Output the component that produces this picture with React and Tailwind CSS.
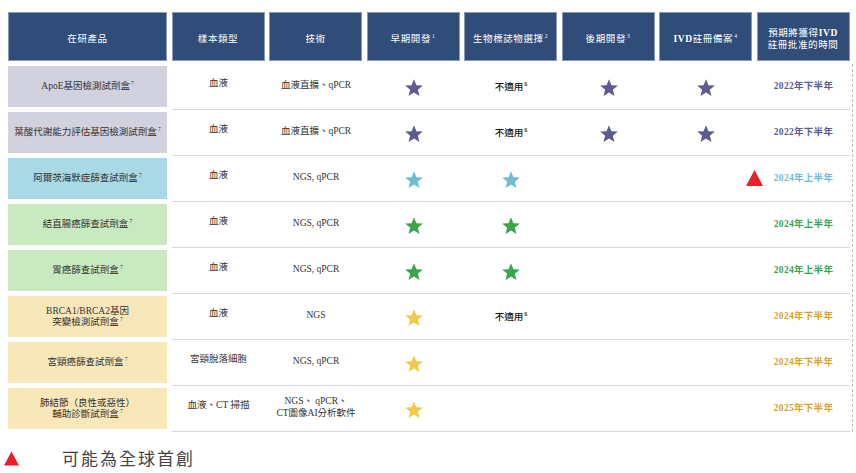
import React from "react";

const FONT = { fontFamily: '"Liberation Serif", "Noto Sans CJK TC", serif' };
const SANS = { fontFamily: '"Noto Sans CJK TC", "Noto Sans", sans-serif' };

function Star({ color }) {
  return (
    <svg width="20" height="20" viewBox="0 0 24 24">
      <polygon
        points="12,1.5 14.9,8.7 22.6,9.1 16.6,14 18.6,21.6 12,17.4 5.4,21.6 7.4,14 1.4,9.1 9.1,8.7"
        fill={color}
      />
    </svg>
  );
}

function Tri({ w = 17, h = 16 }) {
  return (
    <svg width={w} height={h} viewBox="0 0 17 16">
      <polygon points="8.5,0 17,16 0,16" fill="#e8202a" />
    </svg>
  );
}

const Sup = ({ children }) => (
  <span className="inline-block text-[5.5px] leading-none relative top-[-4px] ml-[1px]">{children}</span>
);

const rows = [
  {
    name: ["ApoE基因檢測試劑盒"],
    bg: "bg-[#d1d1df]",
    color: "#5d5b90",
    sample: "血液",
    tech: ["血液直擴、qPCR"],
    early: true,
    bio: "na",
    late: true,
    ivd: true,
    date: "2022年下半年",
    dateColor: "text-[#5d5b90]",
  },
  {
    name: ["葉酸代謝能力評估基因檢測試劑盒"],
    bg: "bg-[#d1d1df]",
    color: "#5d5b90",
    sample: "血液",
    tech: ["血液直擴、qPCR"],
    early: true,
    bio: "na",
    late: true,
    ivd: true,
    date: "2022年下半年",
    dateColor: "text-[#5d5b90]",
  },
  {
    name: ["阿爾茨海默症篩查試劑盒"],
    bg: "bg-[#a9d9e4]",
    color: "#6cbdd5",
    sample: "血液",
    tech: ["NGS, qPCR"],
    early: true,
    bio: "star",
    tri: true,
    date: "2024年上半年",
    dateColor: "text-[#6cbdd5]",
  },
  {
    name: ["結直腸癌篩查試劑盒"],
    bg: "bg-[#c9e9c0]",
    color: "#3aa64c",
    sample: "血液",
    tech: ["NGS, qPCR"],
    early: true,
    bio: "star",
    date: "2024年上半年",
    dateColor: "text-[#3aa64c]",
  },
  {
    name: ["胃癌篩查試劑盒"],
    bg: "bg-[#c9e9c0]",
    color: "#3aa64c",
    sample: "血液",
    tech: ["NGS, qPCR"],
    early: true,
    bio: "star",
    date: "2024年上半年",
    dateColor: "text-[#3aa64c]",
  },
  {
    name: ["BRCA1/BRCA2基因", "突變檢測試劑盒"],
    bg: "bg-[#f8e7b8]",
    color: "#f3c94c",
    sample: "血液",
    tech: ["NGS"],
    early: true,
    bio: "na",
    date: "2024年下半年",
    dateColor: "text-[#d9a521]",
  },
  {
    name: ["宮頸癌篩查試劑盒"],
    bg: "bg-[#f8e7b8]",
    color: "#f3c94c",
    sample: "宮頸脫落細胞",
    tech: ["NGS, qPCR"],
    early: true,
    date: "2024年下半年",
    dateColor: "text-[#d9a521]",
  },
  {
    name: ["肺結節（良性或惡性）", "輔助診斷試劑盒"],
    bg: "bg-[#f8e7b8]",
    color: "#f3c94c",
    sample: "血液、CT 掃描",
    tech: ["NGS、 qPCR、", "CT圖像AI分析軟件"],
    early: true,
    date: "2025年下半年",
    dateColor: "text-[#d9a521]",
  },
];

function HeadCell({ children }) {
  return (
    <div className="bg-[#304d7a] border border-[#8a9bb8] flex items-center justify-center text-center text-white text-[9.5px] leading-[12px] tracking-[0.6px] pt-[4px]">
      <div>{children}</div>
    </div>
  );
}

export default function App() {
  return (
    <div className="w-[856px] h-[473px] bg-white overflow-hidden text-[#333]" style={FONT}>
      <div className="pt-[12px] pl-[8px]">
        <div className="grid grid-cols-[159px_repeat(7,93px)] gap-x-[4.5px] h-[49px] w-[843px]">
          <HeadCell>在研產品</HeadCell>
          <HeadCell>樣本類型</HeadCell>
          <HeadCell>技術</HeadCell>
          <HeadCell>
            早期開發<Sup>1</Sup>
          </HeadCell>
          <HeadCell>
            生物標誌物選擇<Sup>2</Sup>
          </HeadCell>
          <HeadCell>
            後期開發<Sup>3</Sup>
          </HeadCell>
          <HeadCell>
            <b>IVD</b>註冊備案<Sup>4</Sup>
          </HeadCell>
          <HeadCell>
            預期將獲得<b>IVD</b>
            <br />
            註冊批准的時間
          </HeadCell>
        </div>

        <div className="mt-[3px] w-[845px] border-r border-dashed border-[#bdbdbd] flex flex-col">
          {rows.map((r, i) => (
            <div key={i} className="flex h-[46px]">
              <div
                className={`${r.bg} w-[159px] h-[41px] mt-[2px] flex items-center justify-center text-center text-[9.5px] leading-[11px]`}
              >
                <div>
                  {r.name.map((n, j) => (
                    <div key={j} className="whitespace-nowrap">
                      {n}
                      {j === r.name.length - 1 && <Sup>7</Sup>}
                    </div>
                  ))}
                </div>
              </div>
              <div className="ml-[5px] w-[678px] h-[46px] border-b-[1.5px] border-[#d6d6d6] grid grid-cols-[repeat(7,93px)] gap-x-[4.5px]">
                <div className="flex items-center justify-center text-center text-[9.5px] pb-[7px]">
                  {r.sample}
                </div>
                <div className="flex items-center justify-center text-center text-[9.5px] leading-[12px] pb-[4px]">
                  <div>
                    {r.tech.map((t, j) => (
                      <div key={j}>{t}</div>
                    ))}
                  </div>
                </div>
                <div className="flex items-center justify-center pt-[3px]">
                  {r.early && <Star color={r.color} />}
                </div>
                <div className="flex items-center justify-center">
                  {r.bio === "star" && (
                    <div className="pt-[3px]">
                      <Star color={r.color} />
                    </div>
                  )}
                  {r.bio === "na" && (
                    <span className="text-[9.5px] text-[#111] font-medium" style={SANS}>
                      不適用<Sup>6</Sup>
                    </span>
                  )}
                </div>
                <div className="flex items-center justify-center pt-[3px]">
                  {r.late && <Star color={r.color} />}
                </div>
                <div className="flex items-center justify-end pb-[2px] pr-0">
                  {r.ivd && (
                    <div className="w-full flex justify-center pt-[5px]">
                      <Star color={r.color} />
                    </div>
                  )}
                  {r.tri && (
                    <div className="mr-[-10px]">
                      <Tri />
                    </div>
                  )}
                </div>
                <div
                  className={`flex items-center justify-center text-[9.5px] font-bold tracking-[0.3px] ${r.dateColor}`}
                >
                  {r.date}
                </div>
              </div>
            </div>
          ))}
        </div>
      </div>

      <div className="flex items-center mt-[14px] pl-[4px] h-[24px]">
        <Tri w={15} h={15} />
        <span className="ml-[43px] text-[17px] tracking-[2px] text-[#444]" style={SANS}>
          可能為全球首創
        </span>
      </div>
    </div>
  );
}
